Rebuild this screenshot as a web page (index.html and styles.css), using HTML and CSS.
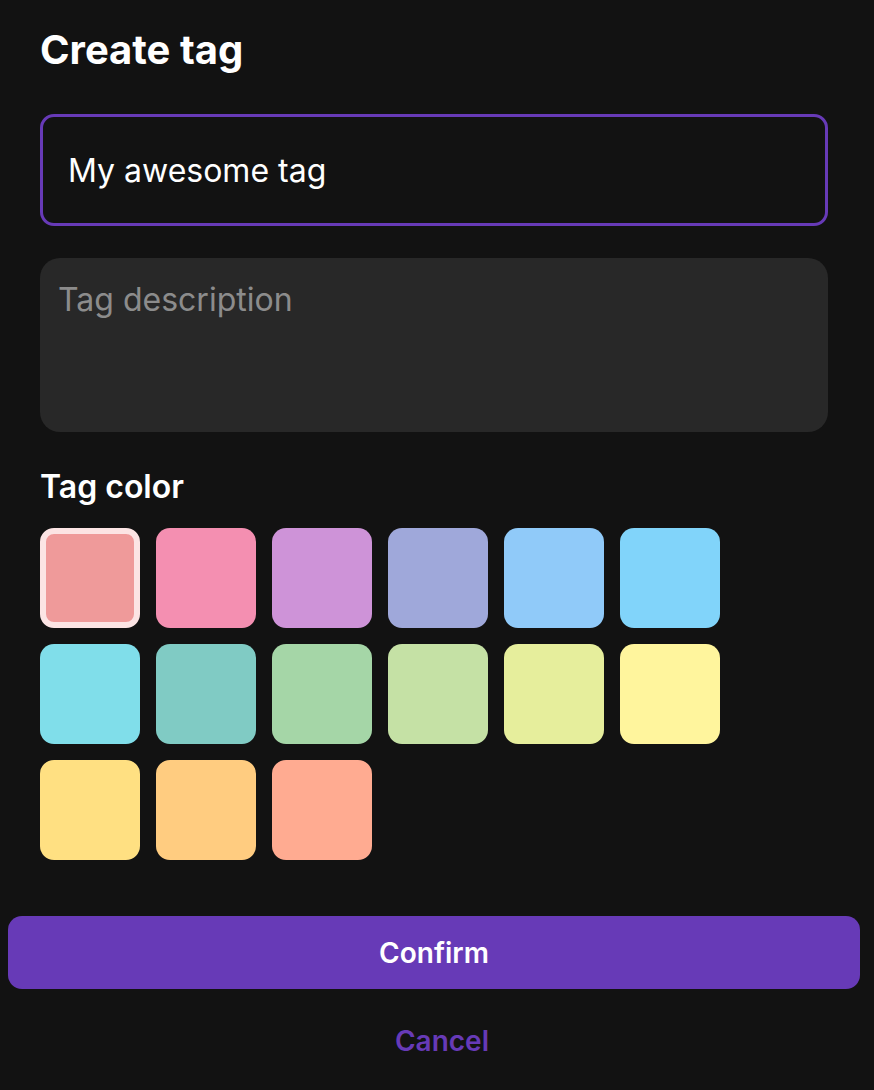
FILE: index.html
```html
<!DOCTYPE html>
<html lang="en">
<head>
<meta charset="utf-8">
<title>Create tag</title>
<link rel="stylesheet" href="styles.css">
</head>
<body>
<div class="sheet">
  <div class="content">
    <h1 class="title">Create tag</h1>
    <input class="name-input" type="text" value="My awesome tag">
    <textarea class="desc-input" placeholder="Tag description"></textarea>
    <div class="label">Tag color</div>
    <div class="swatches">
      <div class="swatch selected" style="background:#ef9a9a"></div>
      <div class="swatch" style="background:#f48fb1"></div>
      <div class="swatch" style="background:#ce93d8"></div>
      <div class="swatch" style="background:#9fa8da"></div>
      <div class="swatch" style="background:#90caf9"></div>
      <div class="swatch" style="background:#81d4fa"></div>
      <div class="swatch" style="background:#80deea"></div>
      <div class="swatch" style="background:#80cbc4"></div>
      <div class="swatch" style="background:#a5d6a7"></div>
      <div class="swatch" style="background:#c5e1a5"></div>
      <div class="swatch" style="background:#e6ee9c"></div>
      <div class="swatch" style="background:#fff59d"></div>
      <div class="swatch" style="background:#ffe082"></div>
      <div class="swatch" style="background:#ffcc80"></div>
      <div class="swatch" style="background:#ffab91"></div>
    </div>
  </div>
  <div class="actions">
    <button class="confirm">Confirm</button>
    <div class="cancel-row"><button class="cancel">Cancel</button></div>
  </div>
</div>
</body>
</html>
```

FILE: styles.css
```css
* { box-sizing: border-box; }
html, body {
  margin: 0;
  padding: 0;
  background: #121212;
  height: 100%;
}
body {
  font-family: Inter, "Noto Sans", sans-serif;
  color: #ffffff;
}
.sheet {
  display: flex;
  flex-direction: column;
}
.content {
  display: flex;
  flex-direction: column;
  padding: 26px 46px 0 40px;
}
.title {
  margin: 0;
  font-size: 40px;
  line-height: 48px;
  font-weight: 700;
  letter-spacing: 0;
}
.name-input {
  margin-top: 40px;
  height: 112px;
  width: 100%;
  background: #121212;
  border: 3px solid #673ab7;
  border-radius: 14px;
  padding: 0 0 0 25px;
  font-family: Inter, "Noto Sans", sans-serif;
  font-size: 32px;
  color: #ffffff;
  outline: none;
}
.desc-input {
  display: block;
  margin-top: 32px;
  height: 174px;
  width: 100%;
  background: #282828;
  border: none;
  border-radius: 20px;
  padding: 22px 18px 20px;
  font-family: Inter, "Noto Sans", sans-serif;
  font-size: 32px;
  line-height: 40px;
  color: #ffffff;
  resize: none;
  outline: none;
}
.desc-input::placeholder {
  color: #8c8c8c;
}
.label {
  margin-top: 35px;
  font-size: 32px;
  line-height: 40px;
  font-weight: 600;
  padding-left: 0;
}
.swatches {
  margin-top: 21px;
  display: grid;
  grid-template-columns: repeat(6, 100px);
  grid-auto-rows: 100px;
  gap: 16px;
}
.swatch {
  border-radius: 14px;
}
.swatch.selected {
  border: 6px solid #fce4e4;
}
.actions {
  display: flex;
  flex-direction: column;
  padding: 56px 14px 0 8px;
}
.confirm {
  height: 73px;
  width: 100%;
  background: #673ab7;
  border: none;
  border-radius: 14px;
  color: #ffffff;
  font-family: Inter, "Noto Sans", sans-serif;
  font-size: 28px;
  font-weight: 600;
  padding: 0;
}
.cancel-row {
  margin-top: 32px;
  display: flex;
  justify-content: center;
  padding-left: 16px;
}
.cancel {
  background: none;
  border: none;
  padding: 0;
  color: #673ab7;
  font-family: Inter, "Noto Sans", sans-serif;
  font-size: 28px;
  line-height: 40px;
  font-weight: 600;
}
```
